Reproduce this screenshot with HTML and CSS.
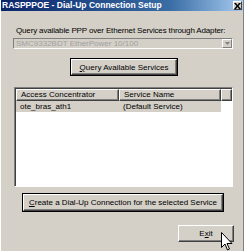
FILE: index.html
```html
<!DOCTYPE html>
<html>
<head>
<meta charset="utf-8">
<link rel="stylesheet" href="styles.css">
</head>
<body>
<div class="window">
  <div class="titlebar">
    <span class="title">RASPPPOE - Dial-Up Connection Setup</span>
    <span class="close"><svg width="7" height="6" viewBox="0 0 7 6"><path d="M0 0h2l1.5 2 1.5-2h2L4.5 3 7 6H5L3.5 4 2 6H0l2.5-3z" fill="#000"/></svg></span>
  </div>
  <div class="body">
    <div class="label">Query available PPP over Ethernet Services through Adapter:</div>
    <div class="combo">
      <span class="combo-text">SMC9332BDT EtherPower 10/100</span>
      <span class="combo-btn"><svg width="5" height="3" viewBox="0 0 5 3"><path d="M0 0h5L2.5 3z" fill="#808080"/></svg></span>
    </div>
    <div class="btn query"><span><u>Q</u>uery Available Services</span></div>
    <div class="list">
      <div class="list-head">
        <div class="col c1">Access Concentrator</div>
        <div class="col c2">Service Name</div>
        <div class="col c3"></div>
      </div>
      <div class="row">
        <div class="cell c1">ote_bras_ath1</div>
        <div class="cell c2">(Default Service)</div>
      </div>
    </div>
    <div class="btn create"><span><u>C</u>reate a Dial-Up Connection for the selected Service</span></div>
    <div class="btn exit"><span>E<u>x</u>it</span></div>
  </div>
  <svg class="cursor" width="12" height="19" viewBox="0 0 12 19"><path d="M0.5 0.5v15l3.5-3.5 2.5 6 2-1-2.5-5.5h5z" fill="#fff" stroke="#000" stroke-width="1" stroke-linejoin="miter"/></svg>
</div>
</body>
</html>
```
FILE: styles.css
```css
html, body {
  margin: 0;
  padding: 0;
  background: #d4d0c8;
}
.window {
  position: relative;
  width: 244px;
  height: 251px;
  box-sizing: border-box;
  background: #d4d0c8;
  border-left: 1px solid #ffffff;
  border-right: 1px solid #808080;
  font-family: "Liberation Sans", Arial, sans-serif;
  font-size: 8px;
  color: #000;
  overflow: hidden;
}
.titlebar {
  height: 11px;
  background: linear-gradient(to right, #0a246a 0%, #3a6ea5 70%, #a6caf0 100%);
  display: flex;
  align-items: center;
  justify-content: space-between;
  padding: 0 1px 0 1px;
}
.title {
  color: #fff;
  font-weight: bold;
  font-size: 8.5px;
  line-height: 11px;
  white-space: nowrap;
}
.close {
  width: 9px;
  height: 9px;
  box-sizing: border-box;
  background: #d4d0c8;
  border-top: 1px solid #fff;
  border-left: 1px solid #fff;
  border-right: 1px solid #404040;
  border-bottom: 1px solid #404040;
  display: flex;
  align-items: center;
  justify-content: center;
}
.body {
  display: flex;
  flex-direction: column;
}
.label {
  margin: 15px 0 0 15px;
  line-height: 10px;
  white-space: nowrap;
  letter-spacing: -0.15px;
}
.combo {
  margin: 2px 0 0 12px;
  width: 220px;
  height: 11px;
  box-sizing: border-box;
  border-top: 1px solid #808080;
  border-left: 1px solid #808080;
  border-right: 1px solid #fff;
  border-bottom: 1px solid #fff;
  background: #d4d0c8;
  display: flex;
  align-items: center;
  justify-content: space-between;
}
.combo-text {
  color: #a0a0a0;
  padding-left: 2px;
  line-height: 9px;
  white-space: nowrap;
}
.combo-btn {
  width: 10px;
  height: 9px;
  box-sizing: border-box;
  border-top: 1px solid #fff;
  border-left: 1px solid #fff;
  border-right: 1px solid #808080;
  border-bottom: 1px solid #808080;
  display: flex;
  align-items: center;
  justify-content: center;
}
.btn {
  box-sizing: border-box;
  background: #d4d0c8;
  border-top: 1px solid #fff;
  border-left: 1px solid #fff;
  border-right: 1px solid #404040;
  border-bottom: 1px solid #404040;
  box-shadow: inset -1px -1px 0 #808080;
  display: flex;
  align-items: center;
  justify-content: center;
  white-space: nowrap;
}
.query {
  margin: 10px 0 0 70px;
  width: 106px;
  height: 16px;
  outline: 1px solid #000;
  outline-offset: 0;
}
.list {
  margin: 12px 0 0 13px;
  width: 219px;
  height: 100px;
  box-sizing: border-box;
  border-top: 1px solid #808080;
  border-left: 1px solid #808080;
  border-right: 1px solid #fff;
  border-bottom: 1px solid #fff;
  box-shadow: inset 1px 1px 0 #404040;
  background: #fff;
  padding: 1px 0 0 1px;
}
.list-head {
  display: flex;
  height: 12px;
}
.col {
  box-sizing: border-box;
  background: #d4d0c8;
  border-top: 1px solid #fff;
  border-left: 1px solid #fff;
  border-right: 1px solid #404040;
  border-bottom: 1px solid #404040;
  box-shadow: inset -1px -1px 0 #808080;
  line-height: 10px;
  padding-left: 4px;
  white-space: nowrap;
}
.c1 { width: 103px; }
.c2 { width: 102px; }
.c3 { flex: 1; }
.row {
  display: flex;
  height: 11px;
  width: 205px;
  background: #d4d0c8;
}
.cell {
  line-height: 11px;
  padding-left: 4px;
  box-sizing: border-box;
  white-space: nowrap;
}
.create {
  margin: 6px 0 0 21px;
  width: 202px;
  height: 19px;
  outline: 1px solid #000;
  outline-offset: -1px;
  border-width: 2px;
}
.exit {
  margin: 13px 0 0 177px;
  width: 56px;
  height: 17px;
}
.cursor {
  position: absolute;
  left: 220px;
  top: 232px;
}
```
